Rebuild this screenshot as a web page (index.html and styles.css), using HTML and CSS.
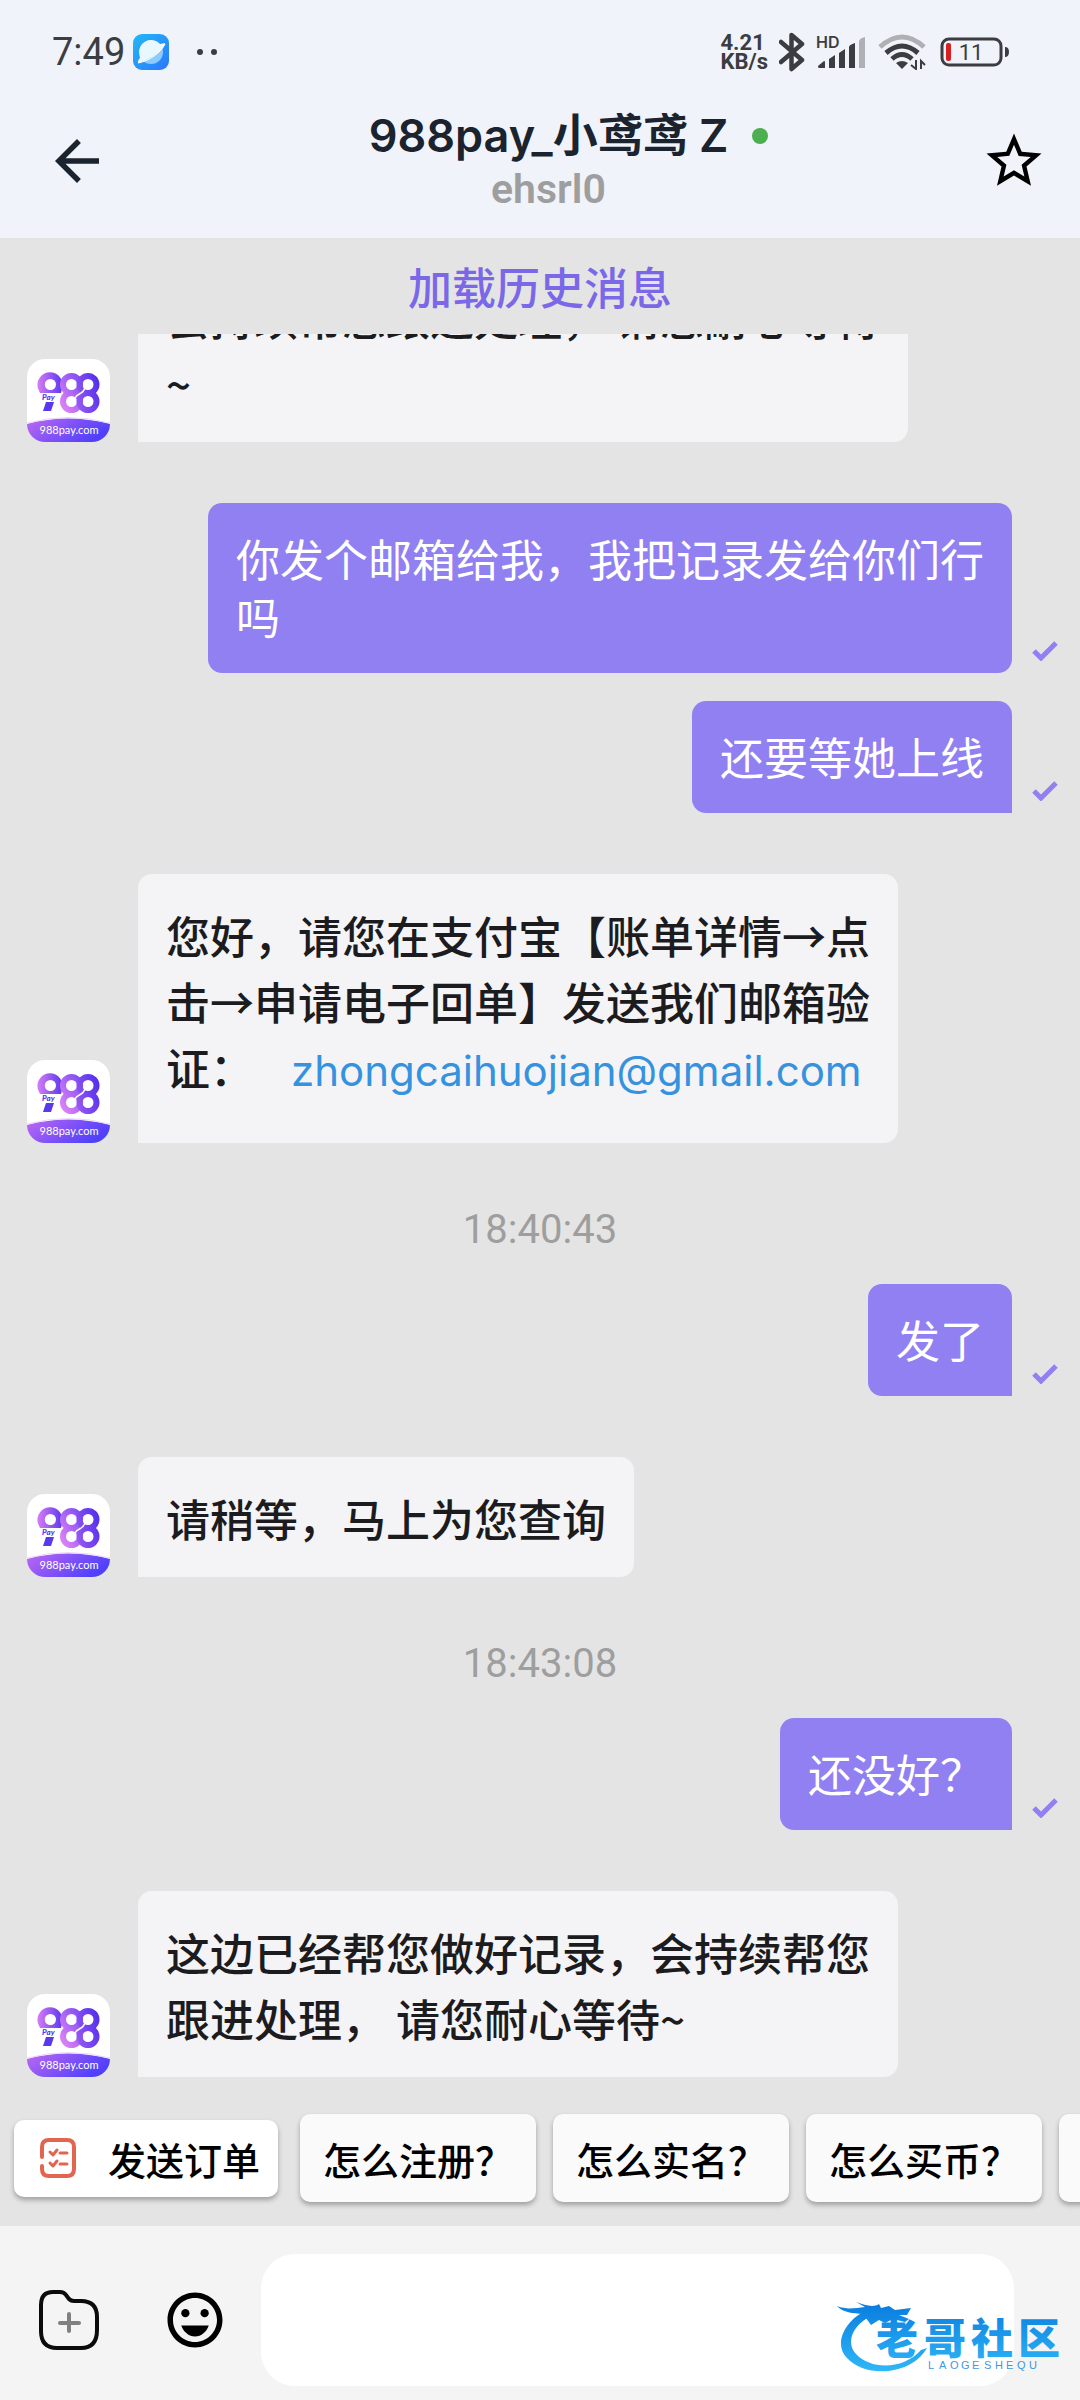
FILE: index.html
```html
<!DOCTYPE html>
<html lang="zh-CN">
<head>
<meta charset="utf-8">
<meta name="viewport" content="width=device-width, initial-scale=1">
<title>988pay_小鸢鸢 Z</title>
<link rel="stylesheet" href="styles.css">
</head>
<body>
<svg class="defs" aria-hidden="true">
  <defs>
    <linearGradient id="violet" x1="0" y1="0" x2="1" y2="0"><stop offset="0" stop-color="#d67cf6"/><stop offset="1" stop-color="#5a38ee"/></linearGradient>
    <linearGradient id="banner" x1="0" y1="0" x2="1" y2="0.4"><stop offset="0" stop-color="#bd68f2"/><stop offset="1" stop-color="#5040fb"/></linearGradient>
    <linearGradient id="ringL" gradientUnits="userSpaceOnUse" x1="32" y1="40" x2="58" y2="24"><stop offset="0" stop-color="#d97ff5"/><stop offset="1" stop-color="#7c4cf4"/></linearGradient>
    <linearGradient id="ringR" gradientUnits="userSpaceOnUse" x1="46" y1="40" x2="73" y2="32"><stop offset="0" stop-color="#9c5cf5"/><stop offset="1" stop-color="#5632ec"/></linearGradient>
    <symbol id="avatar" viewBox="0 0 83 83">
      <rect width="83" height="83" fill="#fff"/>
      <path d="M10.800 29A12.600 12.600 0 1 1 35.200 29L34 34H13Z" fill="url(#violet)"/>
      <circle cx="23.400" cy="25.500" r="5.600" fill="#fff"/>
      <text x="15" y="41" font-family="Lato, sans-serif" font-size="8" font-weight="900" font-style="italic" fill="#5a38ee">Pay</text>
      <path d="M19 43H27L24 52H16Z" fill="#5a38ee"/>
      <g fill="none" stroke-width="6">
        <circle cx="44.500" cy="25.500" r="8.500" stroke="url(#ringL)"/>
        <circle cx="44.500" cy="42.500" r="8.500" stroke="url(#ringL)"/>
        <circle cx="61" cy="25.500" r="8.500" stroke="url(#ringR)"/>
        <circle cx="61" cy="42.500" r="8.500" stroke="url(#ringR)"/>
      </g>
      <path d="M48 39C51 33 55 37 58 29" fill="none" stroke="#fff" stroke-width="1.500" stroke-linecap="round"/>
      <path d="M0 65Q41 54 83 65V83H0Z" fill="url(#banner)"/>
      <path d="M0 64Q41 53 83 64" fill="none" stroke="#ead9fb" stroke-width="1"/>
      <text x="42" y="75" text-anchor="middle" font-family="Lato, sans-serif" font-size="11" fill="#fff">988pay.com</text>
    </symbol>
    <symbol id="tick" viewBox="0 0 26 20"><path d="M2 10L9 17L24 2" fill="none" stroke="#9180f2" stroke-width="5"/></symbol>
  </defs>
</svg>

<div class="app">
  <div class="status">
    <span class="clock">7:49</span>
    <svg class="planet" width="36" height="36" viewBox="0 0 36 36" aria-hidden="true">
      <defs><linearGradient id="sky" x1="0" y1="0" x2="1" y2="1"><stop offset="0" stop-color="#22b8f7"/><stop offset="1" stop-color="#2a78fb"/></linearGradient></defs>
      <rect width="36" height="36" rx="9" fill="url(#sky)"/>
      <circle cx="18" cy="18" r="12" fill="#8ccbfd"/>
      <path d="M6.500 21A12 12 0 0 1 27 10L32 9C32 15 20 24 6 29C4 29 5 26 7 24Z" fill="#e9f7ff"/>
      <path d="M5 29C17 27 28 18 32 10" fill="none" stroke="#fff" stroke-width="1"/>
    </svg>
    <span class="more"><i></i><i></i></span>
    <div class="indicators">
      <div class="speed"><span>4.21</span><span>KB/s</span></div>
      <svg width="26" height="40" viewBox="0 0 26 40" aria-label="Bluetooth"><path d="M2 10L23 28L12.500 37V3L23 12L2 30" fill="none" stroke="#3b3d41" stroke-width="4.500" stroke-linejoin="round" stroke-linecap="round"/></svg>
      <svg width="51" height="34" viewBox="0 0 51 34" aria-label="HD">
        <text x="0" y="13" font-family="Inter, sans-serif" font-size="16" font-weight="600" fill="#3b3d41">HD</text>
        <g fill="#3b3d41"><path d="M3 33Q2 33 2 31L8 26Q9 26 9 27V33Z"/><path d="M13 33V24L19 20V33Z"/><path d="M23 33V18L29 14V33Z"/><path d="M33 33V12Q33 10 39 8V33Z"/></g>
        <path d="M43 33V6Q44 3 49 2V33Z" fill="#aeb0b4"/>
      </svg>
      <svg width="48" height="36" viewBox="0 0 48 36" aria-label="Wi-Fi">
        <path d="M2 13Q24 -7 46 13" fill="none" stroke="#aeb0b4" stroke-width="5"/>
        <g fill="none" stroke="#3b3d41" stroke-width="5"><path d="M8 19Q24 5 40 19"/><path d="M14 25Q24 16 34 25"/></g>
        <path d="M18 29Q24 25 30 29L24 35Z" fill="#3b3d41"/>
        <path d="M38 26V35L33 31M43 35V27L47 31" fill="none" stroke="#3b3d41" stroke-width="2"/>
      </svg>
      <svg width="73" height="32" viewBox="0 0 73 32" aria-label="11%">
        <rect x="5" y="3" width="59" height="26" rx="7" fill="none" stroke="#3b3d41" stroke-width="3"/>
        <rect x="9" y="7" width="5" height="18" rx="2" fill="#d8201f"/>
        <path d="M68 11Q72 11 72 16Q72 21 68 21Z" fill="#3b3d41"/>
        <text x="34" y="24" text-anchor="middle" font-family="Roboto, sans-serif" font-size="22" fill="#3b3d41">11</text>
      </svg>
    </div>
  </div>

  <header class="header">
    <button class="icon" aria-label="返回"><svg width="66" height="66" viewBox="0 0 24 24"><path fill="#1a232e" d="M20 11H7.830l5.590-5.590L12 4l-8 8 8 8 1.410-1.410L7.830 13H20v-2z"/></svg></button>
    <div class="who">
      <div class="name"><h1>988pay_小鸢鸢 Z</h1><i class="online"></i></div>
      <p>ehsrl0</p>
    </div>
    <button class="icon" aria-label="收藏"><svg width="66" height="66" viewBox="0 0 24 24"><path d="M22 9.240l-7.190-.620L12 2 9.190 8.630 2 9.240l5.460 4.730L5.820 21 12 17.270 18.180 21l-1.630-7.030L22 9.240zM12 15.400l-3.760 2.270 1-4.280-3.320-2.880 4.380-.380L12 6.100l1.710 4.040 4.380.380-3.320 2.880 1 4.280L12 15.400z"/></svg></button>
  </header>

  <button class="history">加载历史消息</button>

  <main class="messages">
    <div class="row theirs"><svg class="avatar"><use href="#avatar"/></svg><p class="bubble">会持续帮您跟进处理， 请您耐心等待<br>~</p></div>
    <div class="row mine"><p class="bubble round">你发个邮箱给我，我把记录发给你们行<br>吗</p><svg class="tick"><use href="#tick"/></svg></div>
    <div class="row mine"><p class="bubble">还要等她上线</p><svg class="tick"><use href="#tick"/></svg></div>
    <div class="row theirs"><svg class="avatar"><use href="#avatar"/></svg><p class="bubble">您好，请您在支付宝【账单详情→点<br>击→申请电子回单】发送我们邮箱验<br>证：<a href="mailto:zhongcaihuojian@gmail.com">zhongcaihuojian@gmail.com</a></p></div>
    <time>18:40:43</time>
    <div class="row mine"><p class="bubble">发了</p><svg class="tick"><use href="#tick"/></svg></div>
    <div class="row theirs"><svg class="avatar"><use href="#avatar"/></svg><p class="bubble">请稍等，马上为您查询</p></div>
    <time>18:43:08</time>
    <div class="row mine"><p class="bubble">还没好？</p><svg class="tick"><use href="#tick"/></svg></div>
    <div class="row theirs"><svg class="avatar"><use href="#avatar"/></svg><p class="bubble">这边已经帮您做好记录，会持续帮您<br>跟进处理， 请您耐心等待~</p></div>
  </main>

  <nav class="quick">
    <button class="order">
      <svg width="36" height="40" viewBox="0 0 36 40" aria-hidden="true"><g fill="none" stroke="#e2664f" stroke-linecap="round" stroke-linejoin="round"><path stroke-width="4" d="M2 19V9Q2 2 9 2H27Q34 2 34 9V31Q34 38 27 38H9Q2 38 2 31V28"/><path stroke-width="3" d="M10 14L13 17L17 12M20 15H27M10 25L13 28L17 23M20 26H27"/></g></svg>
      发送订单
    </button>
    <button>怎么注册？</button>
    <button>怎么实名？</button>
    <button>怎么买币？</button>
    <button aria-label="更多"></button>
  </nav>

  <footer class="composer">
    <button class="icon" aria-label="文件"><svg width="66" height="66" viewBox="0 0 66 66" fill="none" stroke-linecap="round" stroke-linejoin="round"><path stroke="#0b0b0b" stroke-width="4" d="M5 18Q5 5 17 5H24Q28 5 30 8L33 12Q35 14 38 14H45Q61 14 61 30V43Q61 61 45 61H21Q5 61 5 44Z"/><path stroke="#808080" stroke-width="4" d="M33 27V44M24 36H43"/></svg></button>
    <button class="icon smile" aria-label="表情"><svg width="66" height="66" viewBox="0 0 24 24"><path d="M12 2C6.480 2 2 6.480 2 12s4.480 10 10 10 10-4.480 10-10S17.520 2 12 2zm0 18c-4.420 0-8-3.580-8-8s3.580-8 8-8 8 3.580 8 8-3.580 8-8 8z"/><circle cx="8.500" cy="9.500" r="1.500"/><circle cx="15.500" cy="9.500" r="1.500"/><path d="M7 14h10c-.800 2.300-2.700 4-5 4s-4.200-1.700-5-4z"/></svg></button>
    <input type="text" aria-label="消息">
    <svg class="watermark" width="226" height="80" viewBox="0 0 226 80" aria-label="老哥社区">
      <defs><linearGradient id="sea" gradientUnits="userSpaceOnUse" x1="0" y1="10" x2="0" y2="76"><stop offset="0" stop-color="#0b7fe0"/><stop offset="1" stop-color="#2fb8f7"/></linearGradient></defs>
      <g fill="url(#sea)">
        <path d="M30 14C8 24 -4 48 10 62C28 82 74 80 90 52L84 54C66 74 34 74 19 58C8 46 16 28 36 19Z"/>
        <path d="M0 10C10 14 18 12 28 11L19 6C28 9 36 12 42 8L44 12L52 10L58 14L74 12L70 19H62L72 23L68 26L56 23L48 27L42 24L34 29L26 18C16 17 6 17 0 10Z"/>
        <text font-family="'Noto Sans CJK SC', sans-serif" font-size="42" font-weight="900" x="39 87 134 181" y="58">老哥社区</text>
      </g>
      <text font-family="'Liberation Sans', sans-serif" font-size="11" fill="#3f97df" x="91 102 113 124 135 147 158 169 180 192" y="73">LAOGESHEQU</text>
    </svg>
  </footer>
</div>
</body>
</html>
```
FILE: styles.css
```css
* { box-sizing: border-box; }

body {
  margin: 0;
  font-family: "Noto Sans CJK SC", sans-serif;
  background: #e4e4e4;
}

h1, p { margin: 0; }
svg { display: block; flex: none; }
button {
  margin: 0;
  padding: 0;
  border: 0;
  background: none;
  font-family: inherit;
  color: inherit;
  cursor: pointer;
}

.defs { position: absolute; width: 0; height: 0; }

.app {
  display: flex;
  flex-direction: column;
  height: 100vh;
  overflow: hidden;
}

/* Status bar */
.status {
  display: flex;
  align-items: center;
  height: 84px;
  padding: 20px 70px 0 52px;
  background: #f0f3fa;
  color: #3b3d41;
}
.clock { font: 400 38px/40px Roboto, sans-serif; }
.planet { margin-left: 8px; }
.more { display: flex; gap: 8px; margin-left: 28px; }
.more i { width: 6px; height: 6px; border-radius: 50%; background: #3b3d41; }
.indicators { display: flex; align-items: center; gap: 11px; margin-left: auto; }
.speed { display: flex; flex-direction: column; font: 700 22px/19px Roboto, sans-serif; }

/* Conversation header */
.header {
  display: grid;
  grid-template-columns: 72px 1fr 66px;
  align-items: center;
  height: 154px;
  padding: 0 33px 0 44px;
  background: #f0f3fa;
}
.icon { width: 66px; height: 66px; flex: none; }
.name {
  display: grid;
  grid-template-columns: 1fr auto 1fr;
  align-items: center;
  color: #1a232e;
}
.name h1 {
  grid-column: 2;
  font: 600 45px/56px Inter, "Noto Sans CJK SC", sans-serif;
  white-space: nowrap;
}
.online {
  width: 16px;
  height: 16px;
  margin-left: 24px;
  border-radius: 50%;
  background: #4caf50;
}
.who p {
  text-align: center;
  font: 600 41px/50px Roboto, sans-serif;
  color: #9e9e9e;
}

.history {
  flex: none;
  height: 96px;
  font-size: 44px;
  font-weight: 500;
  line-height: 64px;
  color: #7b68e8;
}

/* Messages */
.messages {
  display: flex;
  flex: 1;
  flex-direction: column;
  justify-content: flex-end;
  min-height: 0;
  overflow: hidden;
}
.row { display: flex; flex: none; align-items: flex-end; }
.theirs { gap: 28px; margin-top: 61px; padding-left: 27px; }
.mine { justify-content: flex-end; gap: 20px; padding-right: 22px; }
.theirs + .mine { margin-top: 61px; }
.mine + .mine { margin-top: 28px; }
.avatar { width: 83px; height: 83px; border-radius: 18px; }
.tick { width: 26px; height: 20px; margin-bottom: 12px; }
.bubble { font-size: 44px; white-space: nowrap; }
.theirs .bubble {
  padding: 28px 28px 26px;
  border-radius: 14px 14px 14px 0;
  background: #f4f4f7;
  color: #1c1c1f;
  font-weight: 500;
  line-height: 66px;
}
.mine .bubble {
  padding: 26px 28px 28px;
  border-radius: 14px 14px 0 14px;
  background: #9180f2;
  color: #fff;
  line-height: 58px;
}
.mine .round { border-radius: 14px; }
.bubble a {
  display: inline-block;
  margin-left: 37px;
  padding-bottom: 13px;
  font-family: Inter, sans-serif;
  font-size: 42px;
  font-weight: 400;
  color: #3492de;
  text-decoration: none;
}
time {
  flex: none;
  margin: 60px 0 27px;
  text-align: center;
  font: 400 40px/54px Roboto, sans-serif;
  color: #9e9e9e;
}

/* Quick replies */
.quick {
  display: flex;
  flex: none;
  align-items: center;
  gap: 17px;
  padding: 37px 0 24px 14px;
  overflow: hidden;
}
.quick button {
  flex: none;
  height: 88px;
  min-width: 236px;
  padding: 0 23px;
  border-radius: 10px;
  background: #fafafa;
  box-shadow: 0 3px 5px rgba(0, 0, 0, 0.3);
  font-size: 38px;
  font-weight: 500;
  color: #000;
}
.quick .order {
  display: flex;
  align-items: center;
  gap: 32px;
  height: 77px;
  margin-right: 5px;
  padding: 0 18px 0 26px;
  background: #fff;
}

/* Composer */
.composer {
  position: relative;
  display: flex;
  flex: none;
  align-items: center;
  padding: 28px 66px 14px 36px;
  background: #f4f4f4;
}
.smile { margin-left: 60px; }
.composer input {
  flex: 1;
  min-width: 0;
  height: 132px;
  margin-left: 33px;
  padding: 0 36px;
  border: 0;
  border-radius: 34px;
  background: #fff;
  font-family: inherit;
  font-size: 44px;
}
.watermark { position: absolute; right: 17px; bottom: 24px; }
```
